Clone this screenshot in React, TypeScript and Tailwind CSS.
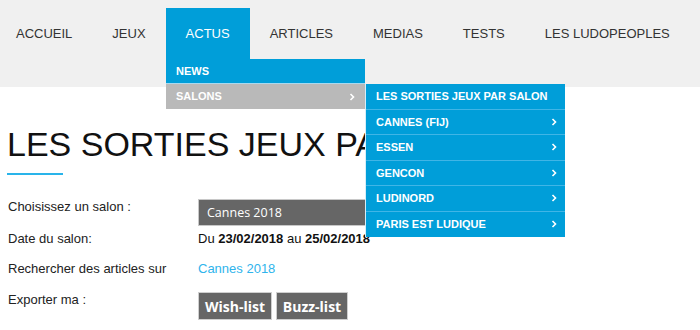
import type { ReactNode } from "react";

const navItems = ["ACCUEIL", "JEUX", "ACTUS", "ARTICLES", "MEDIAS", "TESTS", "LES LUDOPEOPLES"];

const salons = ["CANNES (FIJ)", "ESSEN", "GENCON", "LUDINORD", "PARIS EST LUDIQUE"];

const Chevron = () => (
  <svg width="6" height="8" viewBox="0 0 6 8" className="shrink-0">
    <polyline points="1.5,1 4.5,4 1.5,7" fill="none" stroke="#fff" strokeWidth="1.6" />
  </svg>
);

const Row = ({ label, children, className }: { label: string; children: ReactNode; className?: string }) => (
  <div className={`flex text-[13px] leading-[15px] ${className ?? ""}`}>
    <div className="w-[190px] shrink-0 text-[#222]">{label}</div>
    <div>{children}</div>
  </div>
);

const App = () => {
  return (
    <div className="relative h-[330px] w-[700px] overflow-hidden bg-white font-['Liberation_Sans',Arial,sans-serif]">
      {/* menu */}
      <nav className="relative h-[87px] bg-[#f0f0f0]">
        <ul className="flex pt-2">
          {navItems.map((item, i) => {
            const active = item === "ACTUS";
            return (
              <li
                key={item}
                className={`flex h-[51px] items-center pr-5 text-[13px] ${i === 0 ? "pl-4" : "pl-5"} ${
                  active ? "bg-[#009ed9] text-white" : "text-[#333]"
                }`}
              >
                {item}
              </li>
            );
          })}
        </ul>

        <div className="absolute left-[166px] top-[59px] z-10 w-[199px] text-[11px] font-bold text-white">
          <div className="flex h-[25px] items-center border-b border-[#a9d9ef] bg-[#009ed9] px-[10px]">NEWS</div>
          <div className="relative flex h-[25px] items-center justify-between bg-[#b9b9b9] pl-[10px] pr-[10px]">
            <span>SALONS</span>
            <Chevron />
            <div className="absolute left-[199px] top-0 w-[200px] border-l border-[#d6eef9] bg-[#009ed9]">
              <div className="flex h-[25.5px] items-center border-b border-[#40b5e6] px-[10px]">LES SORTIES JEUX PAR SALON</div>
              {salons.map((s, i) => (
                <div
                  key={s}
                  className={`flex h-[25.5px] items-center justify-between pl-[10px] pr-[8px] ${
                    i < salons.length - 1 ? "border-b border-[#40b5e6]" : ""
                  }`}
                >
                  <span>{s}</span>
                  <Chevron />
                </div>
              ))}
            </div>
          </div>
        </div>
      </nav>

      {/* contenu */}
      <main className="px-[7px]">
        <h1 className="mt-[40px] whitespace-nowrap text-[34px] leading-[34px] font-normal text-[#111]">
          LES SORTIES JEUX PAR SALON
        </h1>
        <div className="mt-[12px] h-[2px] w-[56px] bg-[#29b4ea]" />

        <div className="mt-[24px] pl-[1px]">
          <Row label="Choisissez un salon :">
            <div className="flex h-[27px] w-[220px] items-center border border-[#c8c8c8] bg-[#666] px-[8px] font-['Open_Sans',sans-serif] text-[12.5px] text-white">
              Cannes 2018
            </div>
          </Row>
          <Row label="Date du salon:" className="mt-[5px]">
            <span className="whitespace-nowrap text-[#111]">
              Du <b>23/02/2018</b> au <b>25/02/2018</b>
            </span>
          </Row>
          <Row label="Rechercher des articles sur" className="mt-[15px]">
            <span className="text-[#2fb4ec]">Cannes 2018</span>
          </Row>
          <Row label="Exporter ma :" className="mt-[16px]">
            <div className="flex gap-[4px] font-['Open_Sans',sans-serif] text-[14px] font-bold text-white">
              <button className="flex h-[28px] w-[74px] items-center justify-center border border-[#cfcfcf] bg-[#666]">
                Wish-list
              </button>
              <button className="flex h-[28px] w-[72px] items-center justify-center border border-[#cfcfcf] bg-[#666]">
                Buzz-list
              </button>
            </div>
          </Row>
        </div>
      </main>
    </div>
  );
};

export default App;
